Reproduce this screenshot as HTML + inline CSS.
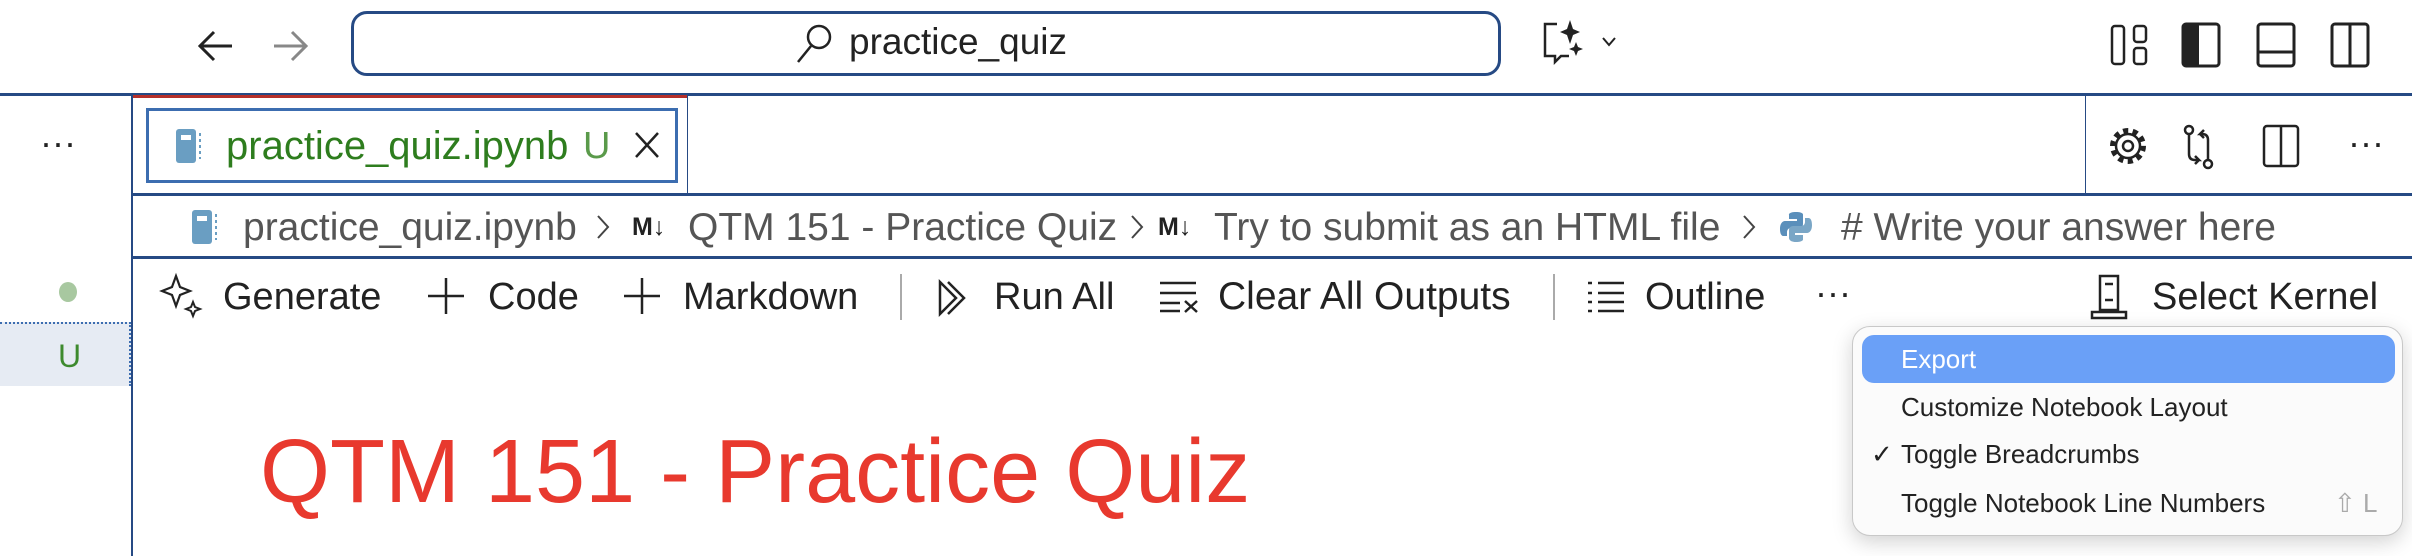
<!DOCTYPE html>
<html><head><meta charset="utf-8"><style>
*{margin:0;padding:0;box-sizing:border-box}
body{width:2412px;height:556px;background:#fff;position:relative;overflow:hidden;font-family:"Liberation Sans",sans-serif;color:#333}
.a{position:absolute;white-space:nowrap}
.hl{position:absolute;left:0;width:2412px;height:3px;background:#264a84}
.t{font-size:38px;line-height:40px}
.b{font-size:39px;line-height:40px}
.m{font-size:26px;line-height:30px}
svg{position:absolute;overflow:visible}
</style></head><body>
<!-- title bar -->
<svg style="left:196px;top:28px" width="40" height="36" viewBox="0 0 40 36"><path d="M36 18H4M18 4L4 18l14 14" fill="none" stroke="#222" stroke-width="3"/></svg>
<svg style="left:270px;top:28px" width="40" height="36" viewBox="0 0 40 36"><path d="M4 18h32M22 4l14 14-14 14" fill="none" stroke="#888" stroke-width="3"/></svg>
<div class="a" style="left:351px;top:11px;width:1150px;height:65px;border:3px solid #264a84;border-radius:16px"></div>
<svg style="left:794px;top:22px" width="40" height="42" viewBox="0 0 40 42"><circle cx="25" cy="15" r="11" fill="none" stroke="#222" stroke-width="2.5"/><path d="M17 24L4 40" stroke="#222" stroke-width="2.5"/></svg>
<div class="a t" style="left:849px;top:22px;font-size:37px;color:#222">practice_quiz</div>
<svg style="left:1543px;top:20px" width="80" height="44" viewBox="0 0 80 44"><path d="M14 4H2v32h10v6l6-6h8" fill="none" stroke="#222" stroke-width="2.5"/><path d="M27 0l3 9 7 3-7 3-3 9-3-9-7-3 7-3z" fill="#222"/><path d="M33 22l2 5 5 2-5 2-2 5-2-5-5-2 5-2z" fill="#222"/><path d="M60 18l6 7 6-7" fill="none" stroke="#222" stroke-width="2"/></svg>
<svg style="left:2110px;top:22px" width="260" height="48" viewBox="0 0 260 48"><rect x="2" y="4" width="12" height="38" rx="3" fill="none" stroke="#222" stroke-width="2.5"/><rect x="24" y="4" width="12" height="16" rx="3" fill="none" stroke="#222" stroke-width="2.5"/><rect x="24" y="26" width="12" height="16" rx="3" fill="none" stroke="#222" stroke-width="2.5"/>
<rect x="73" y="2" width="36" height="42" rx="3" fill="none" stroke="#222" stroke-width="3"/><rect x="73" y="2" width="16" height="42" rx="2" fill="#222"/>
<rect x="148" y="2" width="36" height="42" rx="3" fill="none" stroke="#222" stroke-width="3"/><path d="M148 30h36" stroke="#222" stroke-width="3"/>
<rect x="222" y="2" width="36" height="42" rx="3" fill="none" stroke="#222" stroke-width="3"/><path d="M240 2v42" stroke="#222" stroke-width="3"/></svg>
<div class="hl" style="top:93px"></div>
<!-- tab row -->
<div class="a" style="left:40px;top:122px;font-size:36px;color:#222">···</div>
<div class="a" style="left:131px;top:93px;width:2px;height:463px;background:#264a84"></div>
<div class="a" style="left:133px;top:95px;width:555px;height:3px;background:#b5302a"></div>
<div class="a" style="left:687px;top:95px;width:1px;height:100px;background:#264a84"></div>
<div class="a" style="left:146px;top:108px;width:532px;height:75px;border:3px solid #3c6db0"></div>
<svg style="left:176px;top:129px" width="28" height="34" viewBox="0 0 28 34"><rect x="0" y="0" width="20" height="34" rx="3" fill="#6a9ec2"/><rect x="5" y="6" width="10" height="5" fill="#fff"/><path d="M24 4v26" stroke="#6a9ec2" stroke-width="2" stroke-dasharray="3 3"/></svg>
<div class="a" style="left:226px;top:126px;font-size:40px;line-height:40px;color:#2e7d1e">practice_quiz.ipynb</div>
<div class="a" style="left:583px;top:126px;font-size:38px;line-height:40px;color:#5a9a4a">U</div>
<svg style="left:634px;top:131px" width="26" height="28" viewBox="0 0 26 28"><path d="M2 2l22 24M24 2L2 26" stroke="#222" stroke-width="2.5"/></svg>
<div class="a" style="left:2085px;top:95px;width:1px;height:100px;background:#264a84"></div>
<svg style="left:2108px;top:124px" width="300" height="46" viewBox="0 0 300 46"><circle cx="20" cy="22" r="15" fill="none" stroke="#222" stroke-width="6" stroke-dasharray="5 4.4"/><circle cx="20" cy="22" r="12" fill="#fff"/><circle cx="20" cy="22" r="12" fill="none" stroke="#222" stroke-width="2.5"/><circle cx="20" cy="22" r="5" fill="none" stroke="#222" stroke-width="2.5"/>
<circle cx="81" cy="6" r="4" fill="none" stroke="#222" stroke-width="2.5"/><path d="M81 10v20q0 6 6 6h4l-4-4M91 36l-4 4" fill="none" stroke="#222" stroke-width="2.5"/><circle cx="100" cy="40" r="4" fill="none" stroke="#222" stroke-width="2.5"/><path d="M100 36V16q0-6-6-6h-2l4-4M92 10l4 4" fill="none" stroke="#222" stroke-width="2.5"/>
<rect x="156" y="2" width="34" height="40" rx="3" fill="none" stroke="#222" stroke-width="2.5"/><path d="M173 2v40" stroke="#222" stroke-width="2.5"/></svg>
<div class="a" style="left:2348px;top:122px;font-size:36px;color:#222">···</div>
<div class="hl" style="top:193px;left:131px"></div>
<!-- breadcrumbs -->
<svg style="left:192px;top:210px" width="28" height="34" viewBox="0 0 28 34"><rect x="0" y="0" width="20" height="34" rx="3" fill="#6a9ec2"/><rect x="5" y="6" width="10" height="5" fill="#fff"/><path d="M24 4v26" stroke="#6a9ec2" stroke-width="2" stroke-dasharray="3 3"/></svg>
<div class="a b" style="left:243px;top:208px;color:#555">practice_quiz.ipynb</div>
<svg style="left:596px;top:214px" width="14" height="26"><path d="M2 2l10 11-10 11" fill="none" stroke="#444" stroke-width="2"/></svg>
<div class="a" style="left:632px;top:213px;font-size:25px;font-weight:bold;color:#222">M↓</div>
<div class="a b" style="left:688px;top:208px;color:#555">QTM 151 - Practice Quiz</div>
<svg style="left:1130px;top:214px" width="14" height="26"><path d="M2 2l10 11-10 11" fill="none" stroke="#444" stroke-width="2"/></svg>
<div class="a" style="left:1158px;top:213px;font-size:25px;font-weight:bold;color:#222">M↓</div>
<div class="a b" style="left:1214px;top:208px;color:#555">Try to submit as an HTML file</div>
<svg style="left:1742px;top:214px" width="14" height="26"><path d="M2 2l10 11-10 11" fill="none" stroke="#444" stroke-width="2"/></svg>
<svg style="left:1780px;top:211px" width="32" height="32" viewBox="0 0 32 32"><path d="M16 1c-8 0-7 3-7 3v4h8v2H5s-5 0-5 8 4 7 4 7h3v-4s0-4 4-4h8s4 0 4-4V4s1-3-7-3z" fill="#5a8fbb"/><path d="M16 31c8 0 7-3 7-3v-4h-8v-2h12s5 0 5-8-4-7-4-7h-3v4s0 4-4 4h-8s-4 0-4 4v7s-1 5 7 5z" fill="#7aa6c6"/></svg>
<div class="a b" style="left:1841px;top:208px;color:#555"># Write your answer here</div>
<div class="hl" style="top:256px;left:131px"></div>
<!-- toolbar -->
<svg style="left:162px;top:274px" width="40" height="44" viewBox="0 0 40 44"><path d="M14 2l4 11 10 4-10 4-4 11-4-11-10-4 10-4z" fill="none" stroke="#222" stroke-width="2.2"/><path d="M31 28l2 5 5 2-5 2-2 5-2-5-5-2 5-2z" fill="none" stroke="#222" stroke-width="2"/></svg>
<div class="a t" style="left:223px;top:277px;color:#222">Generate</div>
<svg style="left:428px;top:278px" width="36" height="36"><path d="M18 0v36M0 18h36" stroke="#222" stroke-width="2.5"/></svg>
<div class="a t" style="left:488px;top:277px;color:#222">Code</div>
<svg style="left:624px;top:278px" width="36" height="36"><path d="M18 0v36M0 18h36" stroke="#222" stroke-width="2.5"/></svg>
<div class="a t" style="left:683px;top:277px;color:#222">Markdown</div>
<div class="a" style="left:900px;top:274px;width:2px;height:46px;background:#aaa"></div>
<svg style="left:938px;top:280px" width="36" height="36" viewBox="0 0 36 36"><path d="M2 2l16 16L2 34zM10 2l16 16-16 16" fill="none" stroke="#222" stroke-width="2.5"/></svg>
<div class="a t" style="left:994px;top:277px;color:#222">Run All</div>
<svg style="left:1160px;top:281px" width="40" height="32" viewBox="0 0 40 32"><path d="M0 2h36M0 12h36M0 22h20M0 30h20M25 20l12 11M37 20L25 31" stroke="#222" stroke-width="2.5"/></svg>
<div class="a t" style="left:1218px;top:277px;color:#222;font-size:39px">Clear All Outputs</div>
<div class="a" style="left:1553px;top:274px;width:2px;height:46px;background:#aaa"></div>
<svg style="left:1588px;top:281px" width="36" height="32" viewBox="0 0 36 32"><path d="M0 2h4M10 2h26M0 12h4M10 12h26M0 21h4M10 21h26M0 30h4M10 30h26" stroke="#222" stroke-width="2.5"/></svg>
<div class="a t" style="left:1645px;top:277px;color:#222">Outline</div>
<div class="a" style="left:1815px;top:272px;font-size:36px;color:#222">···</div>
<svg style="left:2090px;top:274px" width="40" height="46" viewBox="0 0 40 46"><rect x="10" y="2" width="18" height="34" fill="none" stroke="#222" stroke-width="2.5"/><path d="M15 10h8M15 26h8M2 44h34v-6H2z" fill="none" stroke="#222" stroke-width="2.5"/></svg>
<div class="a t" style="left:2152px;top:277px;color:#222">Select Kernel</div>
<!-- left gutter -->
<div class="a" style="left:59px;top:282px;width:18px;height:20px;border-radius:50%;background:#a8c8a0"></div>
<div class="a" style="left:0;top:322px;width:131px;height:64px;background:#e6ebf3;border-top:2px dotted #3c6db0;border-right:2px dotted #3c6db0"></div>
<div class="a t" style="left:58px;top:336px;color:#3d8a2e;font-size:32px">U</div>
<!-- title -->
<div class="a" style="left:260px;top:422px;font-size:90px;line-height:100px;color:#e8392e">QTM 151 - Practice Quiz</div>
<!-- menu -->
<div class="a" style="left:1852px;top:326px;width:551px;height:210px;background:#fbfbfb;border:1px solid #c8c8c8;border-radius:18px;box-shadow:0 6px 20px rgba(0,0,0,.18)"></div>
<div class="a" style="left:1862px;top:335px;width:533px;height:48px;background:#6aa0f7;border-radius:12px"></div>
<div class="a m" style="left:1901px;top:344px;color:#fff">Export</div>
<div class="a m" style="left:1901px;top:392px;color:#222">Customize Notebook Layout</div>
<div class="a m" style="left:1871px;top:439px;color:#222">✓</div>
<div class="a m" style="left:1901px;top:439px;color:#222">Toggle Breadcrumbs</div>
<div class="a m" style="left:1901px;top:488px;color:#222">Toggle Notebook Line Numbers</div>
<div class="a m" style="left:2334px;top:488px;color:#aaa">⇧ L</div>
</body></html>
